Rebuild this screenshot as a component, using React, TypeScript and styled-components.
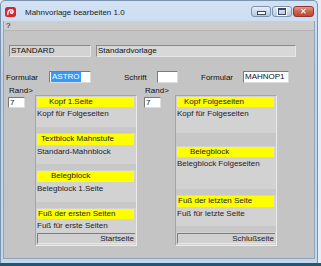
import React from 'react';
import styled, { createGlobalStyle } from 'styled-components';

const Global = createGlobalStyle`
  html, body { margin: 0; padding: 0; }
  body {
    width: 321px;
    height: 266px;
    overflow: hidden;
    background: #e6edf4;
    font-family: "Liberation Sans", Arial, sans-serif;
  }
`;

const Desktop = styled.div`
  width: 321px;
  height: 266px;
  display: flex;
  flex-direction: column;
`;

const Window = styled.div`
  width: 318px;
  height: 263px;
  box-sizing: border-box;
  display: flex;
  flex-direction: column;
  padding: 0 2px 4px 2px;
  background: linear-gradient(#d2e2f4, #bcd2ea 30%, #c3d7ee);
  border: 1px solid #7c93ad;
  border-bottom: none;
  border-radius: 5px 5px 0 0;
`;

const Taskbar = styled.div`
  height: 3px;
  width: 321px;
  background: #24566f;
`;

const TitleBar = styled.div`
  height: 20px;
  display: flex;
  align-items: center;
`;

const AppIcon = styled.svg`
  width: 11px;
  height: 10px;
  margin-left: 2px;
  margin-top: 2px;
`;

const Title = styled.div`
  margin-left: 9px;
  margin-top: 3px;
  font-size: 8px;
  color: #1a1a1a;
`;

const Controls = styled.div`
  margin-left: auto;
  margin-right: 1px;
  margin-top: 1px;
  display: flex;
  gap: 1px;
`;

const CtlButton = styled.div<{ $close?: boolean; $w: number }>`
  width: ${p => p.$w}px;
  height: 11px;
  box-sizing: border-box;
  border: 1px solid ${p => (p.$close ? '#8a3a30' : '#7f93ad')};
  border-radius: 3px;
  background: ${p =>
    p.$close
      ? 'linear-gradient(#e59a8c, #d0604d 50%, #c34632)'
      : 'linear-gradient(#e8f0f8, #cbd9ea 50%, #b7c9df)'};
  display: flex;
  align-items: center;
  justify-content: center;
`;

const MinGlyph = styled.div`
  width: 7px;
  height: 2px;
  margin-top: 3px;
  background: #fff;
  border: 1px solid #3b4a5e;
`;

const MaxGlyph = styled.div`
  width: 6px;
  height: 4px;
  border: 1px solid #3b4a5e;
  border-top-width: 2px;
  box-shadow: 0 0 0 1px #fff;
`;

const CloseGlyph = styled.div`
  color: #fff;
  font-size: 8px;
  font-weight: bold;
  line-height: 8px;
  text-shadow: 0 0 1px #5a1a10;
`;

const Client = styled.div`
  flex: 1;
  background: #c4c4c4;
  display: flex;
  flex-direction: column;
  border: 1px solid #8ea4bd;
  border-top: none;
`;

const MenuBar = styled.div`
  height: 9px;
  background: #cdcdcd;
  border-bottom: 1px solid #b4b4b4;
  display: flex;
  align-items: center;
  padding-left: 2px;
  font-size: 8px;
  color: #111;
`;

const HeaderRow = styled.div`
  display: flex;
  gap: 5px;
  margin-top: 14px;
  padding-left: 5px;
`;

const Field = styled.div<{ $w: number; $bg?: string }>`
  width: ${p => p.$w}px;
  height: 12px;
  box-sizing: border-box;
  background: ${p => p.$bg ?? '#d3d3d3'};
  border-top: 1px solid #8a8a8a;
  border-left: 1px solid #8a8a8a;
  border-right: 1px solid #e6e6e6;
  border-bottom: 1px solid #e6e6e6;
  font-size: 8px;
  line-height: 10px;
  padding-left: 1px;
  color: #111;
  white-space: nowrap;
`;

const FormRow = styled.div`
  display: flex;
  align-items: center;
  margin-top: 14px;
  height: 12px;
`;

const Label = styled.div<{ $w: number; $ml?: number }>`
  width: ${p => p.$w}px;
  margin-left: ${p => p.$ml ?? 0}px;
  font-size: 8px;
  color: #111;
  white-space: nowrap;
`;

const Input = styled.div<{ $w: number; $h?: number }>`
  width: ${p => p.$w}px;
  height: ${p => p.$h ?? 12}px;
  box-sizing: border-box;
  background: #fff;
  border-top: 1px solid #7a7a7a;
  border-left: 1px solid #7a7a7a;
  border-right: 1px solid #dcdcdc;
  border-bottom: 1px solid #dcdcdc;
  font-size: 8px;
  line-height: 10px;
  padding-left: 1px;
  color: #111;
  white-space: nowrap;
`;

const RandInput = styled(Input)`
  margin-top: 2px;
`;

const Selected = styled.span`
  background: #3399ff;
  color: #fff;
  display: inline-block;
  height: 10px;
  padding: 0 1px;
`;

const Columns = styled.div`
  display: flex;
  align-items: flex-start;
  margin-top: 3px;
  padding-left: 4px;
`;

const RandCol = styled.div<{ $w: number; $ml?: number }>`
  width: ${p => p.$w}px;
  margin-left: ${p => p.$ml ?? 0}px;
  display: flex;
  flex-direction: column;
  align-items: flex-start;
`;

const RandLabel = styled.div`
  font-size: 8px;
  line-height: 9px;
  margin-left: 1px;
  color: #111;
`;

const Panel = styled.div`
  width: 102px;
  margin-top: 9px;
  box-sizing: border-box;
  border-top: 1px solid #a4a4a4;
  border-left: 1px solid #a4a4a4;
  border-right: 1px solid #ececec;
  border-bottom: 1px solid #ececec;
  background: #d2d2d2;
  display: flex;
  flex-direction: column;
`;

const Row = styled.div<{ $tone?: 'light' | 'dark' | 'split' }>`
  height: 12.4px;
  box-sizing: border-box;
  font-size: 8px;
  line-height: 12px;
  padding-left: 1px;
  color: #222;
  white-space: nowrap;
  background: ${p =>
    p.$tone === 'dark'
      ? '#c7c7c7'
      : p.$tone === 'split'
      ? 'linear-gradient(#d2d2d2 50%, #c8c8c8 50%)'
      : '#d2d2d2'};
`;

const HeadRow = styled.div`
  height: 12.4px;
  box-sizing: border-box;
  padding: 1px 2px 1px 1px;
  display: flex;
`;

const Head = styled.div<{ $indent: number }>`
  flex: 1;
  background: #ffff00;
  font-size: 8px;
  line-height: 10.4px;
  padding-left: ${p => p.$indent}px;
  color: #222;
  white-space: nowrap;
`;

const PageBar = styled.div`
  height: 12.4px;
  box-sizing: border-box;
  padding: 1px;
  display: flex;
`;

const PageBarInner = styled.div`
  flex: 1;
  background: #d0d0d0;
  border-top: 1px solid #7c7c7c;
  border-left: 1px solid #7c7c7c;
  border-bottom: 1px solid #e8e8e8;
  font-size: 8px;
  line-height: 9px;
  text-align: right;
  padding-right: 1px;
  color: #222;
`;

type Item =
  | { kind: 'head'; text: string; indent: number }
  | { kind: 'text'; text: string }
  | { kind: 'blank'; tone: 'light' | 'dark' | 'split' }
  | { kind: 'bar'; text: string };

const leftItems: Item[] = [
  { kind: 'head', text: 'Kopf 1.Seite', indent: 12 },
  { kind: 'text', text: 'Kopf für Folgeseiten' },
  { kind: 'blank', tone: 'split' },
  { kind: 'head', text: 'Textblock Mahnstufe', indent: 4 },
  { kind: 'text', text: 'Standard-Mahnblock' },
  { kind: 'blank', tone: 'split' },
  { kind: 'head', text: 'Belegblock', indent: 14 },
  { kind: 'text', text: 'Belegblock 1.Seite' },
  { kind: 'blank', tone: 'split' },
  { kind: 'head', text: 'Fuß der ersten Seiten', indent: 1 },
  { kind: 'text', text: 'Fuß für erste Seiten' },
  { kind: 'bar', text: 'Startseite' },
];

const rightItems: Item[] = [
  { kind: 'head', text: 'Kopf Folgeseiten', indent: 7 },
  { kind: 'text', text: 'Kopf für Folgeseiten' },
  { kind: 'blank', tone: 'light' },
  { kind: 'blank', tone: 'dark' },
  { kind: 'head', text: 'Belegblock', indent: 13 },
  { kind: 'text', text: 'Belegblock Folgeseiten' },
  { kind: 'blank', tone: 'light' },
  { kind: 'blank', tone: 'split' },
  { kind: 'head', text: 'Fuß der letzten Seite', indent: 1 },
  { kind: 'text', text: 'Fuß für letzte Seite' },
  { kind: 'blank', tone: 'split' },
  { kind: 'bar', text: 'Schlußseite' },
];

function BlockPanel({ items }: { items: Item[] }) {
  return (
    <Panel>
      {items.map((it, i) => {
        if (it.kind === 'head')
          return (
            <HeadRow key={i}>
              <Head $indent={it.indent}>{it.text}</Head>
            </HeadRow>
          );
        if (it.kind === 'text') return <Row key={i}>{it.text}</Row>;
        if (it.kind === 'bar')
          return (
            <PageBar key={i}>
              <PageBarInner>{it.text}</PageBarInner>
            </PageBar>
          );
        return <Row key={i} $tone={it.tone} />;
      })}
    </Panel>
  );
}

export default function App() {
  return (
    <Desktop>
      <Global />
      <Window>
        <TitleBar>
          <AppIcon viewBox="0 0 11 10">
            <rect x="0" y="0" width="11" height="10" rx="2.5" fill="#d8262e" />
            <path d="M3 8 C2 5 4 2 7 3 C9 4 8 7 6 6 C5 5.5 5.5 4.5 6.5 5" stroke="#fff" strokeWidth="1.4" fill="none" />
          </AppIcon>
          <Title>Mahnvorlage bearbeiten 1.0</Title>
          <Controls>
            <CtlButton $w={20}>
              <MinGlyph />
            </CtlButton>
            <CtlButton $w={20}>
              <MaxGlyph />
            </CtlButton>
            <CtlButton $w={21} $close>
              <CloseGlyph>✕</CloseGlyph>
            </CtlButton>
          </Controls>
        </TitleBar>
        <Client>
          <MenuBar>?</MenuBar>
          <HeaderRow>
            <Field $w={82}>STANDARD</Field>
            <Field $w={200} $bg="#d8d8d8">Standardvorlage</Field>
          </HeaderRow>
          <FormRow>
            <Label $w={43} $ml={2}>Formular</Label>
            <Input $w={42}>
              <Selected>ASTRO</Selected>
            </Input>
            <Label $w={33} $ml={33}>Schrift</Label>
            <Input $w={21} />
            <Label $w={42} $ml={23}>Formular</Label>
            <Input $w={46}>MAHNOP1</Input>
          </FormRow>
          <Columns>
            <RandCol $w={27}>
              <RandLabel>Rand&gt;</RandLabel>
              <RandInput $w={17} $h={11}>7</RandInput>
            </RandCol>
            <BlockPanel items={leftItems} />
            <RandCol $w={31} $ml={7}>
              <RandLabel>Rand&gt;</RandLabel>
              <RandInput $w={17} $h={11}>7</RandInput>
            </RandCol>
            <BlockPanel items={rightItems} />
          </Columns>
        </Client>
      </Window>
      <Taskbar />
    </Desktop>
  );
}
